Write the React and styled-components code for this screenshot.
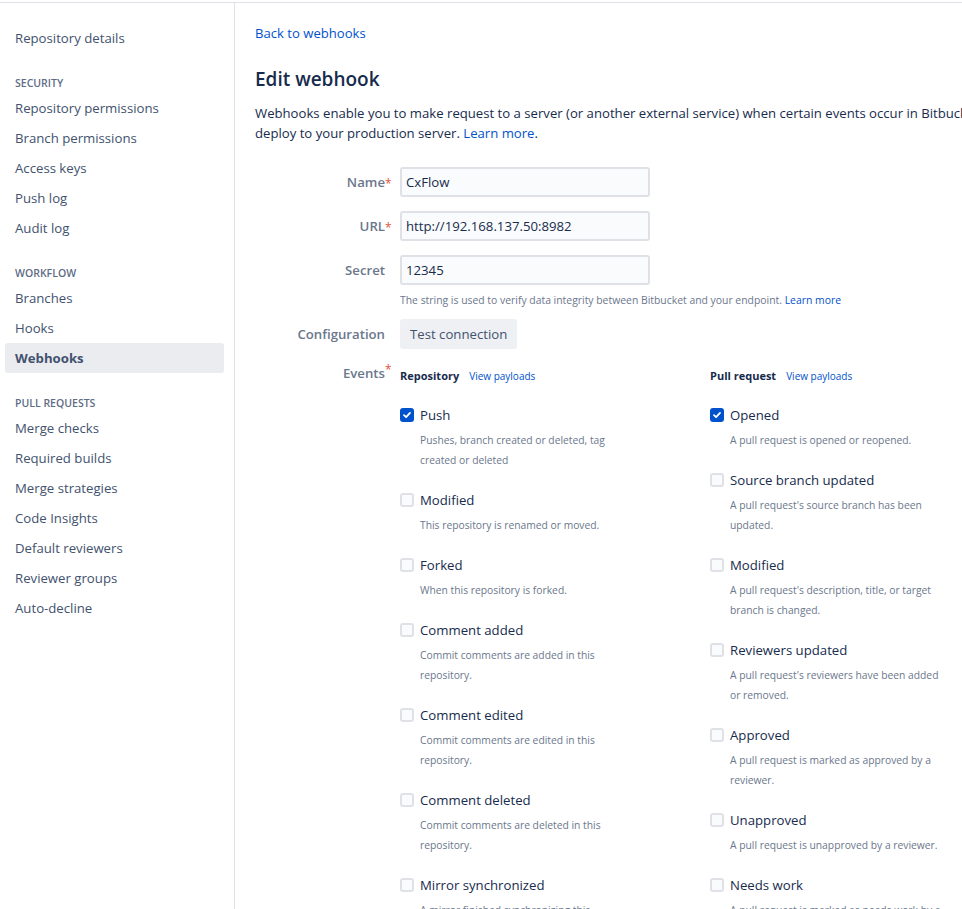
import React from "react";
import styled, { createGlobalStyle, css } from "styled-components";

const Global = createGlobalStyle`
  html, body { margin: 0; padding: 0; background: #fff; overflow: hidden; }
  body {
    font-family: "Open Sans", "Noto Sans", "Liberation Sans", sans-serif;
    font-size: 14px;
    color: #172b4d;
  }
  * { box-sizing: border-box; }
`;

const Page = styled.div`
  display: flex;
  flex-direction: column;
  min-height: 100vh;
`;

const TopRule = styled.div`
  height: 3px;
  border-bottom: 1px solid #dfe1e6;
`;

const Layout = styled.div`
  display: flex;
  flex: 1;
`;

const Sidebar = styled.nav`
  width: 235px;
  flex-shrink: 0;
  border-right: 1px solid #dfe1e6;
  padding: 20px 0;
`;

const NavItem = styled.a`
  display: block;
  margin: 0 10px 0 5px;
  padding: 0 10px;
  height: 30px;
  line-height: 30px;
  font-size: 13.2px;
  color: #42526e;
  text-decoration: none;
  border-radius: 3px;
  white-space: nowrap;
  ${(p) =>
    p.$active &&
    css`
      background: #ebecf0;
      font-weight: 700;
      color: #42526e;
    `}
`;

const NavHeading = styled.div`
  margin: 20px 15px 0;
  height: 20px;
  line-height: 20px;
  font-size: 10.5px;
  font-weight: 600;
  text-transform: uppercase;
  color: #5e6c84;
`;

const Main = styled.main`
  flex: 1;
  min-width: 0;
  padding: 20px;
  overflow: hidden;
`;

const BackLink = styled.a`
  display: block;
  line-height: 20px;
  font-size: 13.1px;
  color: #0052cc;
  text-decoration: none;
`;

const Title = styled.h1`
  margin: 24px 0 12px;
  font-size: 19px;
  line-height: 24px;
  font-weight: 600;
  color: #172b4d;
`;

const Intro = styled.p`
  margin: 0;
  font-size: 13.15px;
  line-height: 20px;
  white-space: nowrap;
  color: #172b4d;
`;

const Link = styled.a`
  color: #0052cc;
  text-decoration: none;
`;

const Form = styled.form`
  margin-top: 24px;
`;

const FieldRow = styled.div`
  display: grid;
  grid-template-columns: 130px auto;
  column-gap: 15px;
  align-items: start;
  margin-bottom: ${(p) => p.$gap ?? 14}px;
`;

const Label = styled.label`
  text-align: right;
  line-height: ${(p) => (p.$tight ? 20 : 30)}px;
  font-size: 13.2px;
  font-weight: 600;
  color: #6b778c;
  white-space: nowrap;
`;

const LabelText = styled.span`
  position: relative;
  ${(p) =>
    p.$required &&
    css`
      &::after {
        content: "*";
        position: absolute;
        left: 100%;
        top: -4px;
        font-size: 12px;
        font-weight: 400;
        color: #e2553a;
      }
    `}
`;

const TextInput = styled.input`
  display: block;
  width: 250px;
  height: 30px;
  padding: 0 4px;
  border: 2px solid #dfe1e6;
  border-radius: 3px;
  background: #fafbfc;
  font-family: inherit;
  font-size: 13.2px;
  color: #172b4d;
  outline: none;
`;

const Help = styled.div`
  margin-top: 7px;
  font-size: 10.4px;
  line-height: 16px;
  color: #6b778c;
  white-space: nowrap;
`;

const Button = styled.button`
  height: 30px;
  padding: 0 10px;
  border: none;
  border-radius: 3px;
  background: #eff0f3;
  font-family: inherit;
  font-size: 13.2px;
  color: #42526e;
  cursor: pointer;
`;

const Columns = styled.div`
  display: grid;
  grid-template-columns: 310px 310px;
`;

const ColumnHeader = styled.div`
  display: flex;
  align-items: baseline;
  gap: 10px;
  margin-top: 3px;
  line-height: 20px;
`;

const ColumnTitle = styled.span`
  font-size: 11px;
  font-weight: 700;
  color: #172b4d;
`;

const SmallLink = styled.a`
  font-size: 10px;
  color: #0052cc;
  text-decoration: none;
`;

const EventList = styled.ul`
  list-style: none;
  margin: 19px 0 0;
  padding: 0;
`;

const EventItem = styled.li`
  display: grid;
  grid-template-columns: 14px 1fr;
  column-gap: 6px;
  margin-bottom: 20px;
`;

const Box = styled.span`
  width: 14px;
  height: 14px;
  margin-top: 3px;
  border-radius: 3px;
  display: flex;
  align-items: center;
  justify-content: center;
  ${(p) =>
    p.$checked
      ? css`
          background: #0052cc;
        `
      : css`
          background: #fafbfc;
          border: 2px solid #dfe1e6;
        `}
`;

const EventTitle = styled.div`
  font-size: 13.2px;
  line-height: 20px;
  color: #172b4d;
`;

const EventDesc = styled.div`
  grid-column: 2;
  margin-top: 5px;
  max-width: 215px;
  font-size: 10.3px;
  line-height: 20px;
  color: #6b778c;
`;

const Check = () => (
  <svg width="10" height="10" viewBox="0 0 10 10" aria-hidden="true">
    <path d="M2 5.2 L4.1 7.2 L8 2.9" fill="none" stroke="#fff" strokeWidth="1.8" strokeLinecap="round" strokeLinejoin="round" />
  </svg>
);

const nav = [
  { item: "Repository details" },
  { heading: "Security" },
  { item: "Repository permissions" },
  { item: "Branch permissions" },
  { item: "Access keys" },
  { item: "Push log" },
  { item: "Audit log" },
  { heading: "Workflow" },
  { item: "Branches" },
  { item: "Hooks" },
  { item: "Webhooks", active: true },
  { heading: "Pull requests" },
  { item: "Merge checks" },
  { item: "Required builds" },
  { item: "Merge strategies" },
  { item: "Code Insights" },
  { item: "Default reviewers" },
  { item: "Reviewer groups" },
  { item: "Auto-decline" },
];

const repoEvents = [
  { t: "Push", d: "Pushes, branch created or deleted, tag created or deleted", c: true },
  { t: "Modified", d: "This repository is renamed or moved." },
  { t: "Forked", d: "When this repository is forked." },
  { t: "Comment added", d: "Commit comments are added in this repository." },
  { t: "Comment edited", d: "Commit comments are edited in this repository." },
  { t: "Comment deleted", d: "Commit comments are deleted in this repository." },
  { t: "Mirror synchronized", d: "A mirror finished synchronizing this repository." },
];

const prEvents = [
  { t: "Opened", d: "A pull request is opened or reopened.", c: true },
  { t: "Source branch updated", d: "A pull request's source branch has been updated." },
  { t: "Modified", d: "A pull request's description, title, or target branch is changed." },
  { t: "Reviewers updated", d: "A pull request's reviewers have been added or removed." },
  { t: "Approved", d: "A pull request is marked as approved by a reviewer." },
  { t: "Unapproved", d: "A pull request is unapproved by a reviewer." },
  { t: "Needs work", d: "A pull request is marked as needs work by a reviewer." },
];

const EventColumn = ({ title, events }) => (
  <div>
    <ColumnHeader>
      <ColumnTitle>{title}</ColumnTitle>
      <SmallLink href="#">View payloads</SmallLink>
    </ColumnHeader>
    <EventList>
      {events.map((e) => (
        <EventItem key={e.t}>
          <Box $checked={e.c}>{e.c && <Check />}</Box>
          <EventTitle>{e.t}</EventTitle>
          <EventDesc>{e.d}</EventDesc>
        </EventItem>
      ))}
    </EventList>
  </div>
);

export default function App() {
  return (
    <Page>
      <Global />
      <TopRule />
      <Layout>
        <Sidebar>
          {nav.map((n, i) =>
            n.heading ? (
              <NavHeading key={i}>{n.heading}</NavHeading>
            ) : (
              <NavItem key={i} href="#" $active={n.active}>
                {n.item}
              </NavItem>
            )
          )}
        </Sidebar>
        <Main>
          <BackLink href="#">Back to webhooks</BackLink>
          <Title>Edit webhook</Title>
          <Intro>
            Webhooks enable you to make request to a server (or another external service) when certain events occur in Bitbucket. For example, to trigger a CI build or
            <br />
            deploy to your production server. <Link href="#">Learn more</Link>.
          </Intro>
          <Form onSubmit={(e) => e.preventDefault()}>
            <FieldRow>
              <Label><LabelText $required>Name</LabelText></Label>
              <TextInput defaultValue="CxFlow" />
            </FieldRow>
            <FieldRow>
              <Label><LabelText $required>URL</LabelText></Label>
              <TextInput defaultValue="http://192.168.137.50:8982" />
            </FieldRow>
            <FieldRow $gap={11}>
              <Label><LabelText>Secret</LabelText></Label>
              <div>
                <TextInput defaultValue="12345" />
                <Help>
                  The string is used to verify data integrity between Bitbucket and your endpoint. <Link href="#">Learn more</Link>
                </Help>
              </div>
            </FieldRow>
            <FieldRow>
              <Label><LabelText>Configuration</LabelText></Label>
              <div>
                <Button type="button">Test connection</Button>
              </div>
            </FieldRow>
            <FieldRow>
              <Label $tight><LabelText $required>Events</LabelText></Label>
              <Columns>
                <EventColumn title="Repository" events={repoEvents} />
                <EventColumn title="Pull request" events={prEvents} />
              </Columns>
            </FieldRow>
          </Form>
        </Main>
      </Layout>
    </Page>
  );
}
